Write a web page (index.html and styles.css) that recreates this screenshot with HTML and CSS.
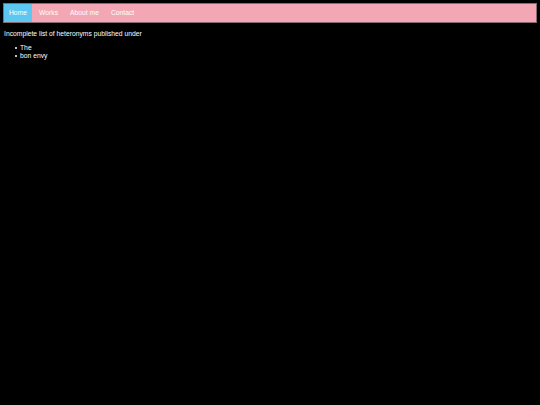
FILE: index.html
```html
<!DOCTYPE html>
<html>
<head>
<meta charset="utf-8">
<link rel="stylesheet" href="styles.css">
</head>
<body>
<nav class="navbar">
  <a class="nav-link active" href="#">Home</a>
  <a class="nav-link" href="#">Works</a>
  <a class="nav-link" href="#">About me</a>
  <a class="nav-link" href="#">Contact</a>
</nav>
<p class="intro">Incomplete list of heteronyms published under</p>
<ul class="names">
  <li>The</li>
  <li>bon envy</li>
</ul>
</body>
</html>
```
FILE: styles.css
```css
html, body {
  background: #000;
}
body {
  margin: 3px;
  color: #fff;
  font-family: "Liberation Sans", Arial, sans-serif;
  font-size: 6.75px;
  line-height: 8px;
}
.navbar {
  display: flex;
  background: #f3a6b4;
  border: 1px solid #8a6a70;
}
.nav-link {
  display: block;
  padding: 5px 5px;
  margin-right: 2px;
  color: #fff;
  text-decoration: none;
  line-height: 8px;
}
.nav-link.active {
  background: #5cc8f2;
}
.intro {
  margin: 7px 0 6px 1px;
}
.names {
  margin: 0;
  padding-left: 17px;
  list-style: none;
}
.names li {
  position: relative;
}
.names li::before {
  content: "";
  position: absolute;
  left: -5px;
  top: 3px;
  width: 2px;
  height: 2px;
  border-radius: 50%;
  background: #fff;
}
```
